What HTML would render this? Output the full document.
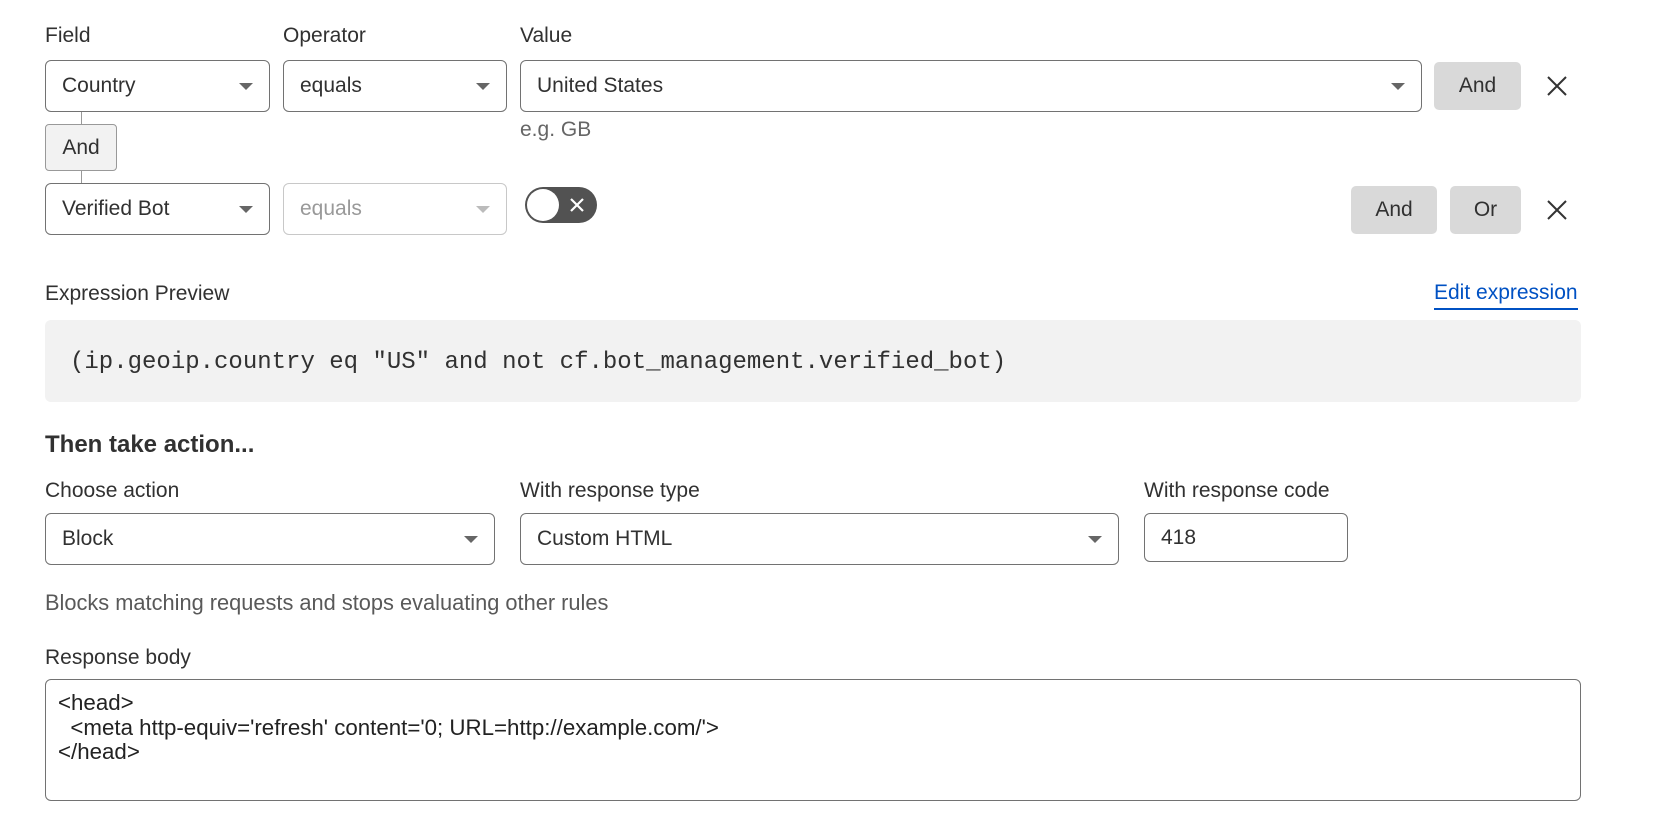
<!DOCTYPE html>
<html><head><meta charset="utf-8"><style>
*{box-sizing:border-box;margin:0;padding:0}
body{width:1654px;height:820px;background:#fff;font-family:"Liberation Sans",Arial,sans-serif;color:#313131;position:relative;overflow:hidden}
.a{position:absolute}
.lbl{font-size:21px;color:#313131;line-height:24px}
.sel{position:absolute;border:1px solid #727272;border-radius:6px;background:#fff;font-size:21px;line-height:24px;padding-left:16px;display:flex;align-items:center;color:#313131}
.sel .car{position:absolute;right:16px;top:50%;margin-top:-3px;width:0;height:0;border-left:7px solid transparent;border-right:7px solid transparent;border-top:7px solid #666}
.btn{position:absolute;background:#d9d9d9;border-radius:5px;font-size:21px;display:flex;align-items:center;justify-content:center;color:#313131}
.x{position:absolute;width:22px;height:22px}
</style></head><body>
<div class="a lbl" style="left:45px;top:24px">Field</div>
<div class="a lbl" style="left:283px;top:24px">Operator</div>
<div class="a lbl" style="left:520px;top:24px">Value</div>

<div class="a" style="left:81px;top:112px;width:1px;height:72px;background:#999"></div>
<div class="sel" style="left:45px;top:60px;width:225px;height:52px">Country<span class="car"></span></div>
<div class="sel" style="left:283px;top:60px;width:224px;height:52px">equals<span class="car"></span></div>
<div class="sel" style="left:520px;top:60px;width:902px;height:52px">United States<span class="car"></span></div>
<div class="btn" style="left:1434px;top:62px;width:87px;height:48px">And</div>
<svg class="x" style="left:1546px;top:75px" viewBox="0 0 22 22"><path d="M2 2L20 20M20 2L2 20" stroke="#333" stroke-width="2"/></svg>
<div class="a" style="left:520px;top:118px;font-size:21px;color:#666">e.g. GB</div>

<div class="a" style="left:45px;top:124px;width:72px;height:47px;background:#f2f2f2;border:1px solid #999;border-radius:4px;font-size:21px;display:flex;align-items:center;justify-content:center">And</div>

<div class="sel" style="left:45px;top:183px;width:225px;height:52px">Verified Bot<span class="car"></span></div>
<div class="sel" style="left:283px;top:183px;width:224px;height:52px;border-color:#c8c8c8;color:#999">equals<span class="car" style="border-top-color:#bbb"></span></div>
<div class="a" style="left:525px;top:187px;width:72px;height:36px;border-radius:18px;background:#525252">
 <div class="a" style="left:2px;top:2px;width:32px;height:32px;border-radius:50%;background:#fff"></div>
 <svg class="a" style="left:44px;top:10px;width:16px;height:16px" viewBox="0 0 16 16"><path d="M2 2L14 14M14 2L2 14" stroke="#fff" stroke-width="2.2"/></svg>
</div>
<div class="btn" style="left:1351px;top:186px;width:86px;height:48px">And</div>
<div class="btn" style="left:1450px;top:186px;width:71px;height:48px">Or</div>
<svg class="x" style="left:1546px;top:199px" viewBox="0 0 22 22"><path d="M2 2L20 20M20 2L2 20" stroke="#333" stroke-width="2"/></svg>

<div class="a lbl" style="left:45px;top:282px">Expression Preview</div>
<div class="a" style="left:1434px;top:281px;font-size:21px;color:#0051c3;border-bottom:2px solid #0051c3;line-height:24px;padding-bottom:3px">Edit expression</div>
<div class="a" style="left:45px;top:320px;width:1536px;height:82px;background:#f2f2f2;border-radius:6px"></div>
<div class="a" style="left:70px;top:349px;font-family:'Liberation Mono','DejaVu Sans Mono',monospace;font-size:24px;color:#313131;line-height:28px;white-space:pre">(ip.geoip.country eq "US" and not cf.bot_management.verified_bot)</div>

<div class="a" style="left:45px;top:431px;font-size:24px;font-weight:bold;color:#313131">Then take action...</div>
<div class="a lbl" style="left:45px;top:479px">Choose action</div>
<div class="a lbl" style="left:520px;top:479px">With response type</div>
<div class="a lbl" style="left:1144px;top:479px">With response code</div>
<div class="sel" style="left:45px;top:513px;width:450px;height:52px">Block<span class="car"></span></div>
<div class="sel" style="left:520px;top:513px;width:599px;height:52px">Custom HTML<span class="car"></span></div>
<div class="sel" style="left:1144px;top:513px;width:204px;height:49px;font-size:21px">418</div>

<div class="a" style="left:45px;top:590px;font-size:21.8px;color:#595959">Blocks matching requests and stops evaluating other rules</div>
<div class="a lbl" style="left:45px;top:646px">Response body</div>
<div class="a" style="left:45px;top:679px;width:1536px;height:122px;border:1px solid #727272;border-radius:6px"></div>
<div class="a" style="left:58px;top:691px;font-size:22.3px;line-height:24.5px;color:#222;white-space:pre">&lt;head&gt;
  &lt;meta http-equiv='refresh' content='0; URL=http://example.com/'&gt;
&lt;/head&gt;</div>
</body></html>
